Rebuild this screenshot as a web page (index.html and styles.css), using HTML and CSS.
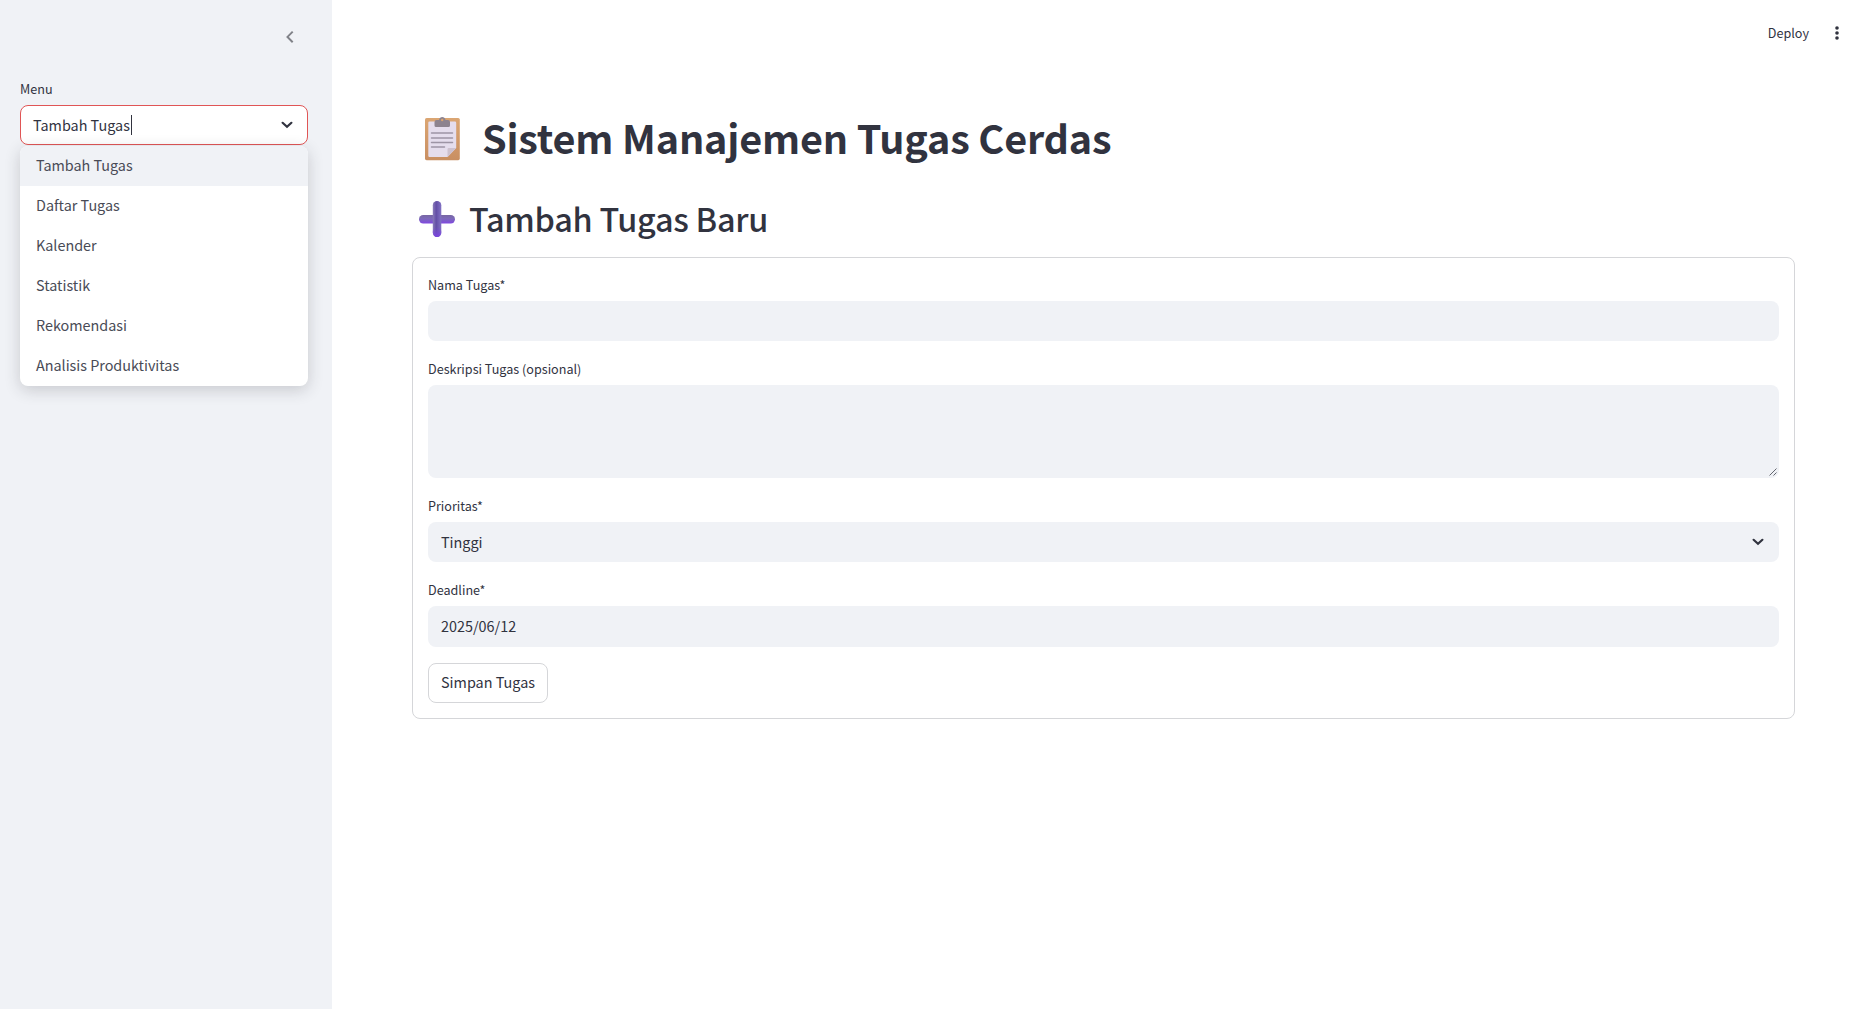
FILE: index.html
```html
<!DOCTYPE html>
<html lang="id">
<head>
<meta charset="utf-8">
<title>Sistem Manajemen Tugas Cerdas</title>
<link rel="stylesheet" href="styles.css">
</head>
<body>
<div class="app">
  <aside class="sidebar">
    <div class="sidebar-header">
      <svg class="collapse" width="20" height="20" viewBox="0 0 20 20"><path d="M12.7 4.600 7.500 9.900l5.200 5.300" fill="none" stroke="#808288" stroke-width="2"/></svg>
    </div>
    <div class="label">Menu</div>
    <div class="select select-active">
      <span>Tambah Tugas</span><span class="caret"></span>
      <svg class="chevron" width="12" height="8" viewBox="0 0 12 8"><path d="M1.6 1.8 6 5.8l4.400-4" fill="none" stroke="#31333f" stroke-width="2.200" stroke-linecap="round"/></svg>
      <ul class="dropdown">
        <li class="option option-current">Tambah Tugas</li>
        <li class="option">Daftar Tugas</li>
        <li class="option">Kalender</li>
        <li class="option">Statistik</li>
        <li class="option">Rekomendasi</li>
        <li class="option">Analisis Produktivitas</li>
      </ul>
    </div>
  </aside>
  <main class="main">
    <header class="toolbar">
      <span class="deploy">Deploy</span>
      <svg class="dots" width="6" height="16" viewBox="0 0 6 16" fill="#31333f"><circle cx="3" cy="3" r="1.8"/><circle cx="3" cy="8" r="1.8"/><circle cx="3" cy="13" r="1.8"/></svg>
    </header>
    <div class="content">
      <h1 class="title">
        <svg class="clipboard" width="35" height="44" viewBox="0 0 35 44">
          <defs><linearGradient id="board" x1="0" y1="0" x2="0" y2="1"><stop offset="0" stop-color="#dba673"/><stop offset="1" stop-color="#c98f62"/></linearGradient></defs>
          <rect x="0" y="1" width="34.8" height="42.200" rx="1.6" fill="url(#board)"/>
          <path d="M4.500 4.500h25.500a1.200 1.200 0 0 1 1.200 1.200V31l-8.700 9H4.500a1.200 1.200 0 0 1-1.200-1.200v-33A1.200 1.200 0 0 1 4.500 4.500z" fill="#e5dded"/>
          <path d="M31.200 31h-7.400a1.300 1.300 0 0 0-1.300 1.300V40z" fill="#cdc1cf"/>
          <path d="M6.500 16h21M6.500 21h21M6.500 25.500h21M6.500 30h13" stroke="#9d94a5" stroke-width="1.500" stroke-linecap="round"/>
          <path d="M9.500 8.500V5A2 2 0 0 1 11.500 3H14c.6-4 5.900-4 6.500 0H23a2 2 0 0 1 2 2v3.500a1.500 1.500 0 0 1-1.500 1.500H11a1.500 1.500 0 0 1-1.500-1.500z" fill="#8d838f"/>
          <circle cx="17.200" cy="3" r="1.200" fill="#d9a36e"/>
        </svg>
        <span class="title-text">Sistem Manajemen Tugas Cerdas</span>
      </h1>
      <h2 class="subtitle">
        <svg class="plus" width="36" height="36" viewBox="0 0 36 36">
          <defs>
            <linearGradient id="barH" x1="0" y1="0" x2="0" y2="1"><stop offset="0" stop-color="#7765a3"/><stop offset=".4" stop-color="#7c6ab8"/><stop offset="1" stop-color="#8048e0"/></linearGradient>
            <linearGradient id="barV" x1="0" y1="0" x2="1" y2="0"><stop offset="0" stop-color="#8a7cba"/><stop offset=".4" stop-color="#634ea6"/><stop offset="1" stop-color="#8272c4"/></linearGradient>
            <linearGradient id="tip" x1="0" y1="0" x2="0" y2="1"><stop offset="0" stop-color="#7a44e0" stop-opacity="0"/><stop offset="1" stop-color="#7a44e0"/></linearGradient>
          </defs>
          <rect x="0" y="14" width="36" height="8.500" rx="4.200" fill="url(#barH)"/>
          <rect x="13.800" y="0" width="8.500" height="36" rx="4.200" fill="url(#barV)"/>
          <rect x="13.800" y="26" width="8.500" height="10" rx="4.200" fill="url(#tip)"/>
        </svg>
        <span class="subtitle-text">Tambah Tugas Baru</span>
      </h2>
      <form class="form">
        <div class="field"><div class="label">Nama Tugas*</div><div class="input"></div></div>
        <div class="field"><div class="label">Deskripsi Tugas (opsional)</div>
          <div class="input area"><svg class="grip" width="8" height="8" viewBox="0 0 8 8"><path d="M.5 7.500l7-7M4.500 7.500l3-3" stroke="#555761" stroke-width=".9"/></svg></div></div>
        <div class="field"><div class="label">Prioritas*</div>
          <div class="input select"><span>Tinggi</span>
          <svg class="chevron" width="12" height="8" viewBox="0 0 12 8"><path d="M1.6 1.8 6 5.8l4.400-4" fill="none" stroke="#31333f" stroke-width="2.200" stroke-linecap="round"/></svg></div></div>
        <div class="field"><div class="label">Deadline*</div><div class="input date">2025/06/12</div></div>
        <button class="submit" type="button">Simpan Tugas</button>
      </form>
    </div>
  </main>
</div>
</body>
</html>
```

FILE: styles.css
```css
* { box-sizing: border-box; }
body {
  margin: 0;
  font-family: "Noto Sans CJK SC", "Noto Sans", sans-serif;
  font-size: 14.4px;
  line-height: 24px;
  color: #31333f;
  background: #fff;
}
.app { display: flex; height: 1009px; }
.sidebar { width: 332px; flex: none; padding: 0 24px 0 20px; background: #f0f2f6; }
.sidebar-header { display: flex; justify-content: flex-end; height: 77px; padding: 27px 8px 0 0; }
.label { height: 28px; font-size: 12.6px; line-height: 24px; }
.select { position: relative; display: flex; align-items: center; height: 40px; padding: 0 15px 0 13px; border-radius: 8px; }
.select-active { background: #fff; border: 1px solid #e05555; padding: 0 14px 0 12px; }
.caret { width: 1px; height: 20px; margin-left: 1px; background: #31333f; }
.chevron { margin-left: auto; }
.dropdown {
  position: absolute;
  top: 40px;
  left: -1px;
  width: 288px;
  margin: 0;
  padding: 0;
  list-style: none;
  border-radius: 8px;
  overflow: hidden;
  background: #fff;
  box-shadow: 0 4px 16px rgba(38, 39, 48, .2);
}
.option { height: 40px; padding: 0 16px; line-height: 38px; letter-spacing: -.02px; color: #494b56; }
.option-current { background: #f0f2f6; }
.main { flex: 1; display: flex; flex-direction: column; }
.toolbar { display: flex; align-items: center; justify-content: flex-end; height: 66px; padding: 0 31px 0 0; gap: 25px; font-size: 12.6px; }
.content { padding: 0 76px 0 80px; }
.title { display: flex; align-items: center; height: 54px; margin: 46px 0 0; padding-left: 13px; gap: 22px; font-size: 39.6px; font-weight: 700; line-height: 48px; letter-spacing: -.19px; }
.title-text { margin-bottom: 5px; }
.subtitle { display: flex; align-items: center; height: 44px; margin: 31px 0 16px; padding-left: 7px; gap: 14px; font-size: 32.4px; font-weight: 500; line-height: 42px; letter-spacing: -.27px; }
.subtitle-text { margin-bottom: 2px; }
.form { display: flex; flex-direction: column; gap: 16px; height: 462px; padding: 15px; border: 1px solid #d5d6d9; border-radius: 8px; }
.input { height: 40px; border-radius: 8px; background: #f0f2f6; }
.area { display: flex; justify-content: flex-end; align-items: flex-end; height: 93px; padding: 2px; }
.date { height: 41px; padding: 0 13px; line-height: 39px; }
.submit { align-self: flex-start; width: 120px; height: 40px; padding: 0 0 2px; border: 1px solid #d5d6d9; border-radius: 8px; background: #fff; color: inherit; font: inherit; }
```
